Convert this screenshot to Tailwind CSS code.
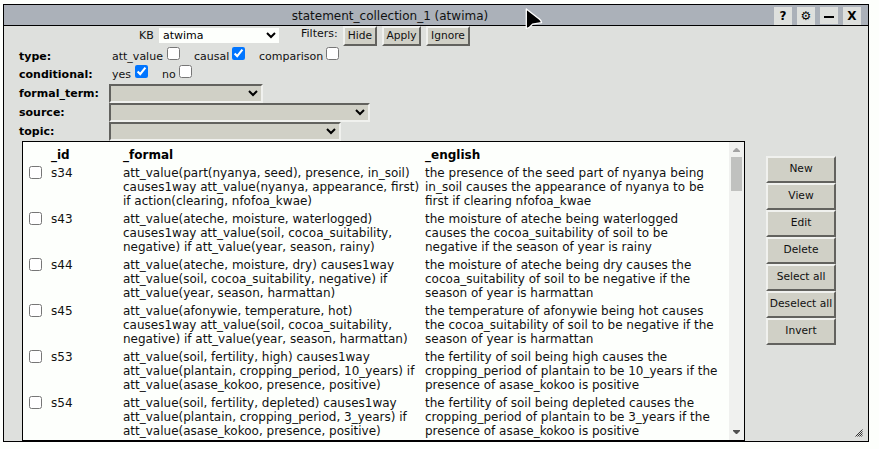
<!DOCTYPE html>
<html lang="en">
<head>
<meta charset="utf-8">
<title>statement_collection_1 (atwima)</title>
<script src="https://cdn.jsdelivr.net/npm/@tailwindcss/browser@4"></script>
</head>
<body class="bg-[#fdfffc] overflow-hidden font-['DejaVu_Sans',sans-serif] text-[12px] leading-[14px] text-[#111]">
<div class="relative ml-[3px] mt-[4px] w-[866px] h-[438px] border border-black bg-[#dee0dd] flex flex-col">
  <header class="relative h-[21px] shrink-0 border-b border-black bg-[#abb1b9] flex">
    <div class="w-[772px] text-center pt-[4px]">statement_collection_1 (atwima)</div>
    <div class="absolute right-[7px] top-[2px] flex gap-[5px] font-bold text-center text-black leading-[18px]">
      <div class="w-[18px] h-[18px] bg-[#dee0dd]">?</div>
      <div class="w-[18px] h-[18px] bg-[#dee0dd] font-normal">⚙</div>
      <div class="w-[18px] h-[17px] bg-[#dee0dd] flex justify-center"><span class="mt-[9px] w-[10px] h-[2px] bg-black"></span></div>
      <div class="w-[18px] h-[18px] bg-[#dee0dd]">X</div>
    </div>
  </header>

  <section class="h-[115px] shrink-0 text-[11px] leading-[13px]">
    <div class="h-[20px] flex items-start pl-[135px]">
      <span class="w-[20px] pt-[3px]">KB</span>
      <select class="appearance-auto w-[120px] h-[15px] bg-[#fdfffc] text-black text-[11px] mt-[2px]"><option>atwima</option></select>
      <span class="ml-[22px] w-[42px] pt-[1px]">Filters:</span>
      <div class="flex gap-[5px] text-[10.67px] leading-[16px] text-center">
        <button class="w-[34px] h-[20px] border-2 border-t-[#f0f1ee] border-l-[#f0f1ee] border-b-[#62625e] border-r-[#62625e] bg-[#d0d0c6]">Hide</button>
        <button class="w-[39px] h-[20px] border-2 border-t-[#f0f1ee] border-l-[#f0f1ee] border-b-[#62625e] border-r-[#62625e] bg-[#d0d0c6]">Apply</button>
        <button class="w-[44px] h-[20px] border-2 border-t-[#f0f1ee] border-l-[#f0f1ee] border-b-[#62625e] border-r-[#62625e] bg-[#d0d0c6]">Ignore</button>
      </div>
    </div>
    <div class="h-[18px] flex items-start pl-[15px]">
      <b class="w-[93px] pt-[4px] text-black">type:</b>
      <span class="w-[55px] pt-[4px]">att_value</span><input type="checkbox" class="appearance-auto w-[13px] h-[13px] mt-[1px]">
      <span class="w-[38px] ml-[14px] pt-[4px]">causal</span><input type="checkbox" checked class="appearance-auto w-[13px] h-[13px] mt-[1px]">
      <span class="w-[67px] ml-[14px] pt-[4px]">comparison</span><input type="checkbox" class="appearance-auto w-[13px] h-[13px] mt-[1px]">
    </div>
    <div class="h-[20px] flex items-start pl-[15px]">
      <b class="w-[93px] pt-[4px] text-black">conditional:</b>
      <span class="w-[23px] pt-[4px]">yes</span><input type="checkbox" checked class="appearance-auto w-[13px] h-[13px] mt-[1px]">
      <span class="w-[17px] ml-[14px] pt-[4px]">no</span><input type="checkbox" class="appearance-auto w-[13px] h-[13px] mt-[1px]">
    </div>
    <div class="h-[19px] flex pl-[15px]">
      <b class="w-[90px] pt-[3px] text-black">formal_term:</b>
      <select class="appearance-auto w-[154px] h-[19px] border-2 border-t-[#62625e] border-l-[#62625e] border-b-[#f0f1ee] border-r-[#f0f1ee] bg-[#d0d0c6] text-black"></select>
    </div>
    <div class="h-[19px] flex pl-[15px]">
      <b class="w-[90px] pt-[3px] text-black">source:</b>
      <select class="appearance-auto w-[261px] h-[19px] border-2 border-t-[#62625e] border-l-[#62625e] border-b-[#f0f1ee] border-r-[#f0f1ee] bg-[#d0d0c6] text-black"></select>
    </div>
    <div class="h-[19px] flex pl-[15px]">
      <b class="w-[90px] pt-[3px] text-black">topic:</b>
      <select class="appearance-auto w-[232px] h-[19px] border-2 border-t-[#62625e] border-l-[#62625e] border-b-[#f0f1ee] border-r-[#f0f1ee] bg-[#d0d0c6] text-black"></select>
    </div>
  </section>

  <main class="flex h-[300px] pl-[18px]">
    <div class="w-[723px] h-[300px] border border-black bg-[#fdfffc] flex justify-between overflow-hidden">
      <div class="pl-[6px] pt-[6px] whitespace-nowrap">
        <div class="grid grid-cols-[22px_72px_302px_300px] h-[18px] font-bold text-black"><span></span><span>_id</span><span>_formal</span><span>_english</span></div>
        <div class="grid grid-cols-[22px_72px_302px_300px] h-[46px]"><input type="checkbox" class="appearance-auto w-[13px] h-[13px]"><span>s34</span><span>att_value(part(nyanya, seed), presence, in_soil)<br>causes1way att_value(nyanya, appearance, first)<br>if action(clearing, nfofoa_kwae)</span><span>the presence of the seed part of nyanya being<br>in_soil causes the appearance of nyanya to be<br>first if clearing nfofoa_kwae</span></div>
        <div class="grid grid-cols-[22px_72px_302px_300px] h-[46px]"><input type="checkbox" class="appearance-auto w-[13px] h-[13px]"><span>s43</span><span>att_value(ateche, moisture, waterlogged)<br>causes1way att_value(soil, cocoa_suitability,<br>negative) if att_value(year, season, rainy)</span><span>the moisture of ateche being waterlogged<br>causes the cocoa_suitability of soil to be<br>negative if the season of year is rainy</span></div>
        <div class="grid grid-cols-[22px_72px_302px_300px] h-[46px]"><input type="checkbox" class="appearance-auto w-[13px] h-[13px]"><span>s44</span><span>att_value(ateche, moisture, dry) causes1way<br>att_value(soil, cocoa_suitability, negative) if<br>att_value(year, season, harmattan)</span><span>the moisture of ateche being dry causes the<br>cocoa_suitability of soil to be negative if the<br>season of year is harmattan</span></div>
        <div class="grid grid-cols-[22px_72px_302px_300px] h-[46px]"><input type="checkbox" class="appearance-auto w-[13px] h-[13px]"><span>s45</span><span>att_value(afonywie, temperature, hot)<br>causes1way att_value(soil, cocoa_suitability,<br>negative) if att_value(year, season, harmattan)</span><span>the temperature of afonywie being hot causes<br>the cocoa_suitability of soil to be negative if the<br>season of year is harmattan</span></div>
        <div class="grid grid-cols-[22px_72px_302px_300px] h-[46px]"><input type="checkbox" class="appearance-auto w-[13px] h-[13px]"><span>s53</span><span>att_value(soil, fertility, high) causes1way<br>att_value(plantain, cropping_period, 10_years) if<br>att_value(asase_kokoo, presence, positive)</span><span>the fertility of soil being high causes the<br>cropping_period of plantain to be 10_years if the<br>presence of asase_kokoo is positive</span></div>
        <div class="grid grid-cols-[22px_72px_302px_300px] h-[46px]"><input type="checkbox" class="appearance-auto w-[13px] h-[13px]"><span>s54</span><span>att_value(soil, fertility, depleted) causes1way<br>att_value(plantain, cropping_period, 3_years) if<br>att_value(asase_kokoo, presence, positive)</span><span>the fertility of soil being depleted causes the<br>cropping_period of plantain to be 3_years if the<br>presence of asase_kokoo is positive</span></div>
      </div>
      <div class="w-[15px] shrink-0 bg-[#f0f1ef] flex flex-col items-center">
        <svg class="mt-[6px] w-[7px] h-[4px]" viewBox="0 0 7 4"><path d="M0 4V3L3 0H4L7 3V4Z" fill="#a3a3a3"/></svg>
        <div class="mt-[5px] w-[11px] h-[34px] bg-[#c0c1bf]"></div>
        <svg class="mt-auto mb-[6px] w-[7px] h-[4px]" viewBox="0 0 7 4"><path d="M0 0V1L3 4H4L7 1V0Z" fill="#505050"/></svg>
      </div>
    </div>
    <div class="ml-[21px] mt-[15px] w-[70px] text-[10.67px] leading-[13px]">
      <button class="block w-[70px] h-[27px] pb-[2px] border-2 border-t-[#f0f1ee] border-l-[#f0f1ee] border-b-[#62625e] border-r-[#62625e] bg-[#d0d0c6] whitespace-nowrap">New</button>
      <button class="block w-[70px] h-[27px] pb-[2px] border-2 border-t-[#f0f1ee] border-l-[#f0f1ee] border-b-[#62625e] border-r-[#62625e] bg-[#d0d0c6] whitespace-nowrap">View</button>
      <button class="block w-[70px] h-[27px] pb-[2px] border-2 border-t-[#f0f1ee] border-l-[#f0f1ee] border-b-[#62625e] border-r-[#62625e] bg-[#d0d0c6] whitespace-nowrap">Edit</button>
      <button class="block w-[70px] h-[27px] pb-[2px] border-2 border-t-[#f0f1ee] border-l-[#f0f1ee] border-b-[#62625e] border-r-[#62625e] bg-[#d0d0c6] whitespace-nowrap">Delete</button>
      <button class="block w-[70px] h-[27px] pb-[2px] border-2 border-t-[#f0f1ee] border-l-[#f0f1ee] border-b-[#62625e] border-r-[#62625e] bg-[#d0d0c6] whitespace-nowrap">Select all</button>
      <button class="block w-[70px] h-[27px] pb-[2px] border-2 border-t-[#f0f1ee] border-l-[#f0f1ee] border-b-[#62625e] border-r-[#62625e] bg-[#d0d0c6] whitespace-nowrap">Deselect all</button>
      <button class="block w-[70px] h-[27px] pb-[2px] border-2 border-t-[#f0f1ee] border-l-[#f0f1ee] border-b-[#62625e] border-r-[#62625e] bg-[#d0d0c6] whitespace-nowrap">Invert</button>
    </div>
  </main>
  <svg class="absolute right-[5px] bottom-[4px] w-[8px] h-[8px]" viewBox="0 0 8 8"><path d="M0.5 7.5L7.5 0.5M2.5 7.5L7.5 2.5M4.5 7.5L7.5 4.5M6.5 7.5L7.5 6.5" stroke="#333" stroke-width="1" fill="none"/></svg>
  <svg class="absolute left-[520px] top-[2px] w-[19px] h-[24px]" viewBox="0 0 19 24"><path d="M2.3 2V21.5L5 20.6L8.5 17.2L17.6 15.6Q17.2 13.2 14.6 11.4Z" fill="#000" stroke="#fff" stroke-width="1.3" stroke-linejoin="round"/></svg>
</div>
</body>
</html>
